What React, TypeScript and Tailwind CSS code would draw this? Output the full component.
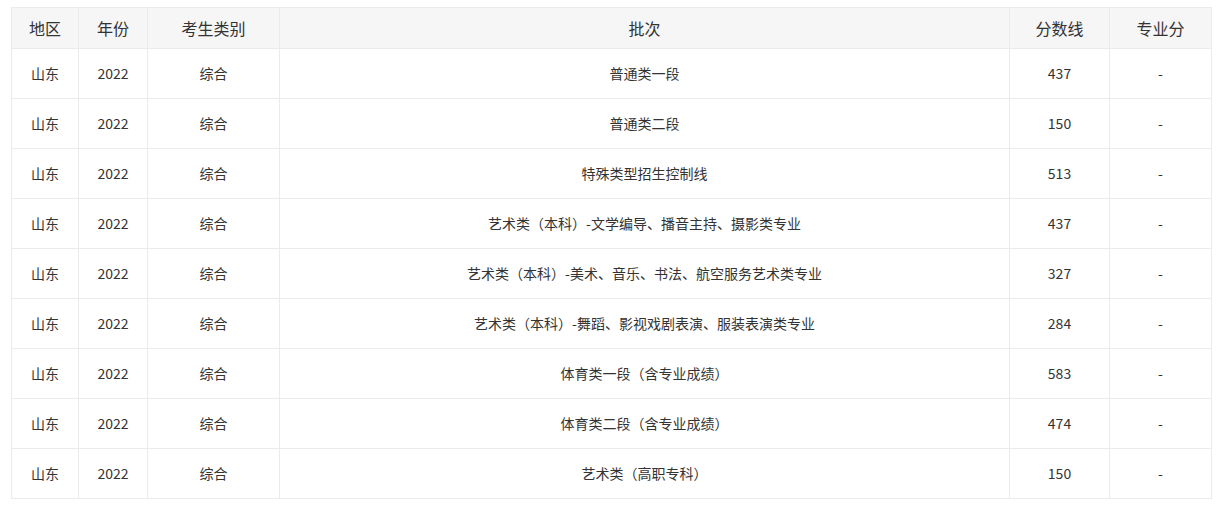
import React from "react";

const rows: [string, string][] = [
  ["普通类一段", "437"],
  ["普通类二段", "150"],
  ["特殊类型招生控制线", "513"],
  ["艺术类（本科）-文学编导、播音主持、摄影类专业", "437"],
  ["艺术类（本科）-美术、音乐、书法、航空服务艺术类专业", "327"],
  ["艺术类（本科）-舞蹈、影视戏剧表演、服装表演类专业", "284"],
  ["体育类一段（含专业成绩）", "583"],
  ["体育类二段（含专业成绩）", "474"],
  ["艺术类（高职专科）", "150"],
];

export default function App() {
  return (
    <div
      className="bg-white w-[1224px] h-[509px] pl-[11px] pt-[7px]"
      style={{ fontFamily: '"Noto Sans CJK SC", "Noto Sans", sans-serif' }}
    >
      <table className="border-collapse table-fixed w-[1200px] text-[#333]">
        <colgroup>
          <col className="w-[67px]" />
          <col className="w-[69px]" />
          <col className="w-[132px]" />
          <col className="w-[730px]" />
          <col className="w-[100px]" />
          <col className="w-[102px]" />
        </colgroup>
        <thead>
          <tr className="bg-[#f6f6f6] h-[41px]">
            {["地区", "年份", "考生类别", "批次", "分数线", "专业分"].map((h) => (
              <th key={h} className="border border-[#ebebeb] text-[16px] font-normal text-center p-0">
                {h}
              </th>
            ))}
          </tr>
        </thead>
        <tbody>
          {rows.map(([b, s], i) => (
            <tr key={i} className="h-[50px]">
              <td className="border border-[#ebebeb] text-[14px] text-center p-0">山东</td>
              <td className="border border-[#ebebeb] text-[14px] text-center p-0">2022</td>
              <td className="border border-[#ebebeb] text-[14px] text-center p-0">综合</td>
              <td className="border border-[#ebebeb] text-[14px] text-center p-0">{b}</td>
              <td className="border border-[#ebebeb] text-[14px] text-center p-0">{s}</td>
              <td className="border border-[#ebebeb] text-[14px] text-center p-0">-</td>
            </tr>
          ))}
        </tbody>
      </table>
    </div>
  );
}
